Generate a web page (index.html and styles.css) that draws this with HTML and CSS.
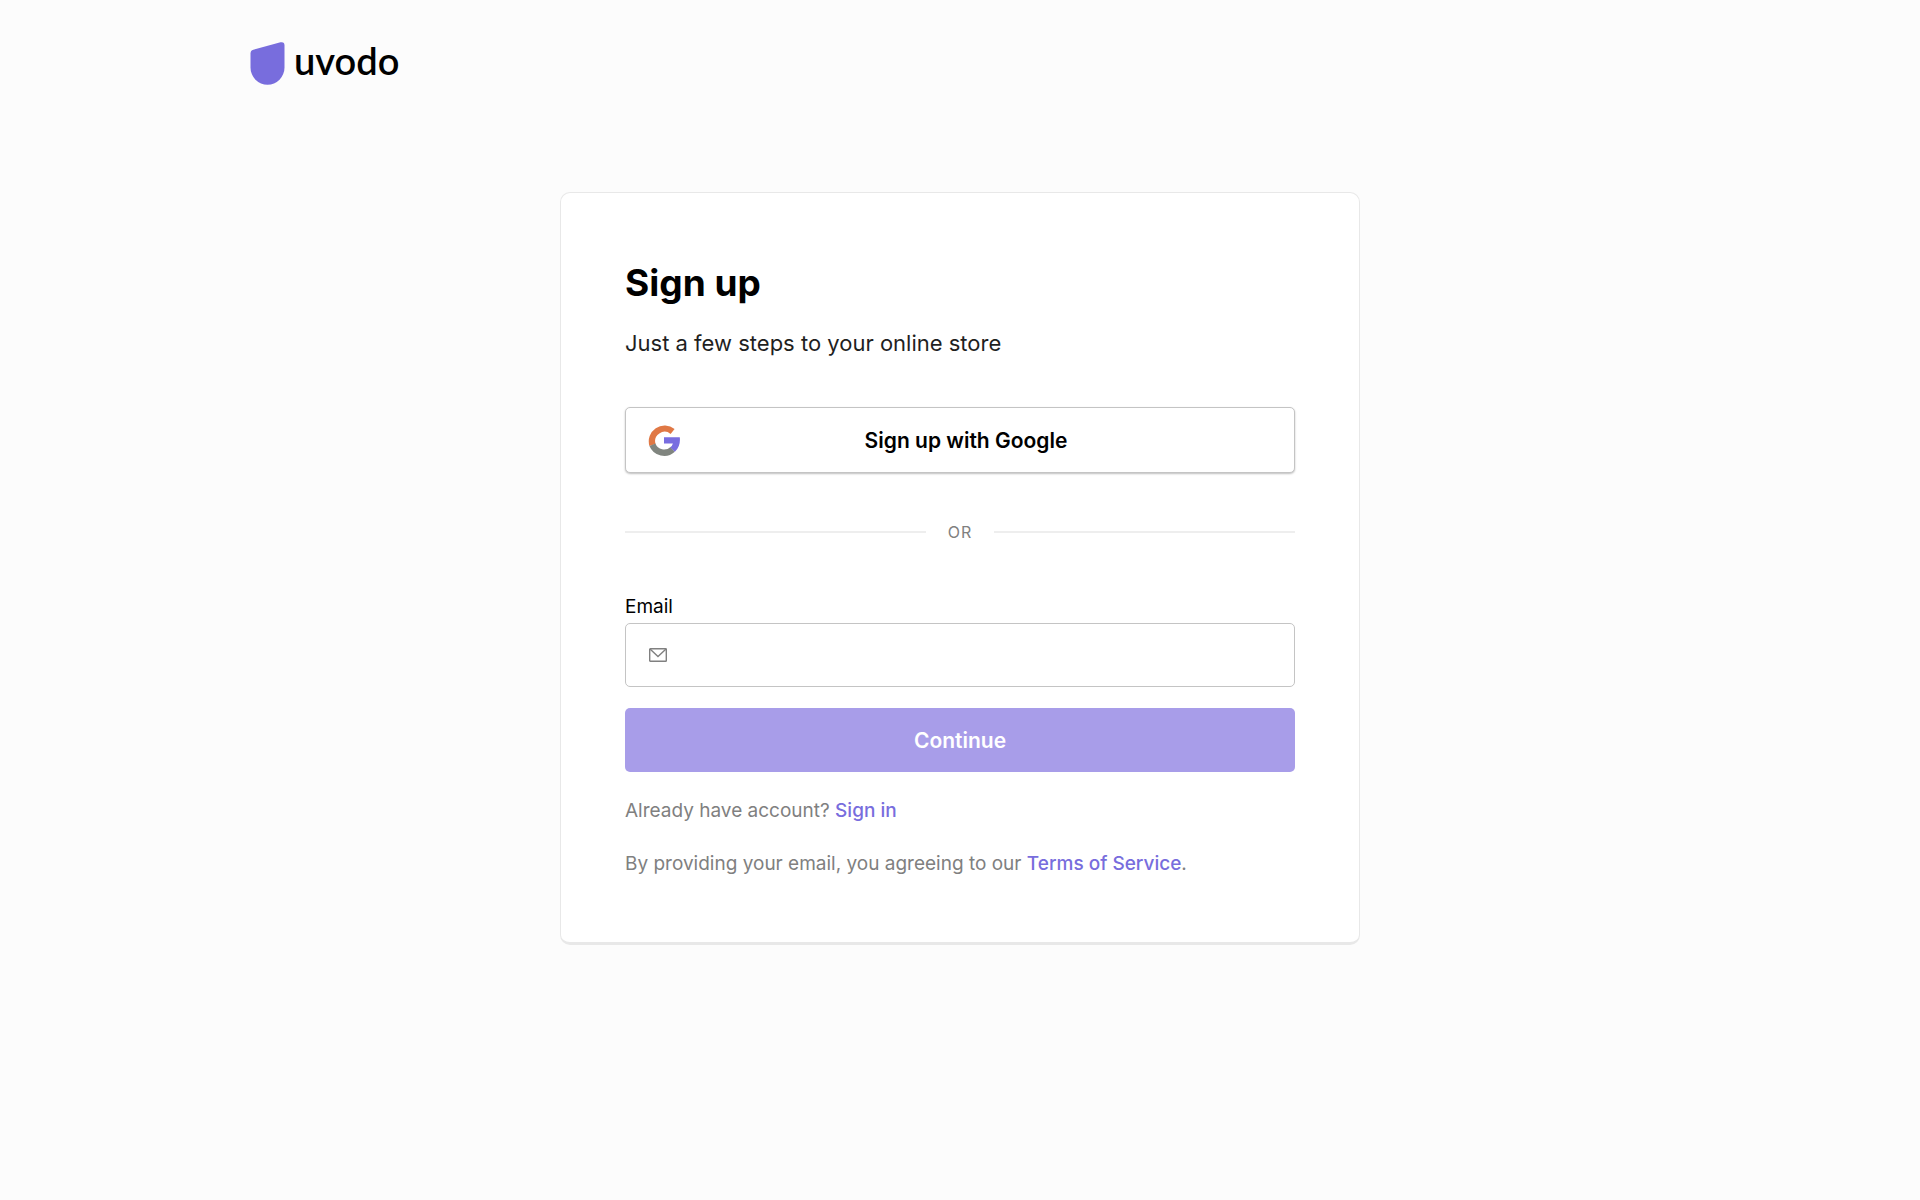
FILE: index.html
```html
<!DOCTYPE html>
<html lang="en">
<head>
    <meta charset="UTF-8">
    <meta name="viewport" content="width=device-width, initial-scale=1.0">
    <title>Sign up - uvodo</title>
    <link rel="stylesheet" href="styles.css">
</head>
<body>
    <header class="header">
        <a href="#" class="logo">
            <svg class="logo-mark" viewBox="0 0 35 43" aria-hidden="true">
                <path d="M.5 11.500Q.5 8.600 3.300 7.800L30.500 .3Q34.500 -.6 34.500 3.400V25.500A17 17.300 0 0 1 .5 25.500Z" fill="#786ddd"/>
            </svg>
            <span class="logo-text">uvodo</span>
        </a>
    </header>

    <main class="card">
        <h1 class="title">Sign up</h1>
        <p class="subtitle">Just a few steps to your online store</p>

        <button type="button" class="google-btn">
            <svg class="google-icon" viewBox="0 0 32 32" aria-hidden="true">
                <path d="M24.600 7.400A12.700 12.700 0 0 0 4.500 21" fill="none" stroke="#e07845" stroke-width="6.400"/>
                <path d="M4.400 20.800A12.700 12.700 0 0 0 24.700 25.400" fill="none" stroke="#80857f" stroke-width="6.400"/>
                <path d="M16 13.200H31.800Q32.800 22.600 26.900 27.800L22.200 23.300Q24.400 21.600 24.900 19.400H16Z" fill="#786de0"/>
            </svg>
            <span class="google-label">Sign up with Google</span>
        </button>

        <div class="divider">OR</div>

        <form class="form">
            <label class="label" for="email">Email</label>
            <div class="field">
                <svg class="mail-icon" viewBox="0 0 18 14" aria-hidden="true">
                    <rect x=".7" y=".7" width="16.600" height="12.600" rx=".6"/>
                    <path d="M1 1l8 7.500L17 1"/>
                </svg>
                <input class="input" type="email" id="email" name="email">
            </div>
            <button type="submit" class="submit-btn" disabled>Continue</button>
        </form>

        <p class="note">Already have account? <a href="#">Sign in</a></p>
        <p class="note">By providing your email, you agreeing to our <a href="#">Terms of Service</a>.</p>
    </main>
</body>
</html>
```

FILE: styles.css
```css
* {
    margin: 0;
    padding: 0;
    box-sizing: border-box;
}

body {
    background-color: #fcfcfc;
    min-height: 100vh;
    font-family: 'Inter', sans-serif;
    color: #000;
}

a {
    color: #786ddd;
    text-decoration: none;
}

.header {
    max-width: 1420px;
    margin: 0 auto;
    padding: 42px 0;
}

.logo {
    display: flex;
    align-items: center;
    gap: 9px;
    width: max-content;
    height: 43px;
    color: #000;
}

.logo-mark {
    width: 35px;
    height: 43px;
}

.logo-text {
    font-family: 'Lato', sans-serif;
    font-size: 38px;
    line-height: 36px;
    font-weight: 600;
    padding-bottom: 8px;
}

.card {
    max-width: 800px;
    margin: 65px auto;
    padding: 64px;
    background-color: #fff;
    border: 1px solid #e8e8e8;
    border-bottom-width: 3px;
    border-radius: 10px;
}

.title {
    font-size: 37px;
    line-height: 52px;
    font-weight: 700;
}

.subtitle {
    margin-top: 18px;
    font-size: 22px;
    line-height: 32px;
    color: #1f1f1f;
}

.google-btn {
    display: flex;
    align-items: center;
    width: 100%;
    height: 66px;
    margin-top: 48px;
    padding: 0 42px 0 22px;
    background-color: #fff;
    border: 1px solid #c4c4c4;
    border-radius: 5px;
    box-shadow: 0 1px 2px rgba(0, 0, 0, 0.25);
    font-family: inherit;
    cursor: pointer;
}

.google-icon {
    width: 32px;
    height: 32px;
}

.google-label {
    flex: 1;
    font-size: 21px;
    font-weight: 600;
    color: #000;
}

.divider {
    display: flex;
    align-items: center;
    gap: 22px;
    margin-top: 47px;
    font-size: 16px;
    line-height: 24px;
    letter-spacing: 1px;
    color: #808080;
}

.divider::before,
.divider::after {
    content: '';
    flex: 1;
    height: 2px;
    background-color: #eee;
}

.form {
    display: flex;
    flex-direction: column;
    margin-top: 51px;
}

.label {
    font-size: 19px;
    line-height: 24px;
}

.field {
    display: flex;
    align-items: center;
    height: 64px;
    margin-top: 4px;
    padding: 0 23px;
    border: 1px solid #c4c4c4;
    border-radius: 5px;
}

.mail-icon {
    width: 18px;
    height: 14px;
    fill: none;
    stroke: #808080;
    stroke-width: 1.4;
}

.input {
    flex: 1;
    height: 100%;
    margin-left: 16px;
    border: 0;
    outline: 0;
    background: transparent;
    font-family: inherit;
    font-size: 19px;
}

.submit-btn {
    height: 64px;
    margin-top: 21px;
    background-color: #a89de9;
    border: 0;
    border-radius: 5px;
    font-family: inherit;
    font-size: 21px;
    font-weight: 600;
    color: #fff;
}

.note {
    margin-top: 24px;
    font-size: 19px;
    line-height: 29px;
    color: #808080;
}

.note a {
    font-weight: 500;
}
```
